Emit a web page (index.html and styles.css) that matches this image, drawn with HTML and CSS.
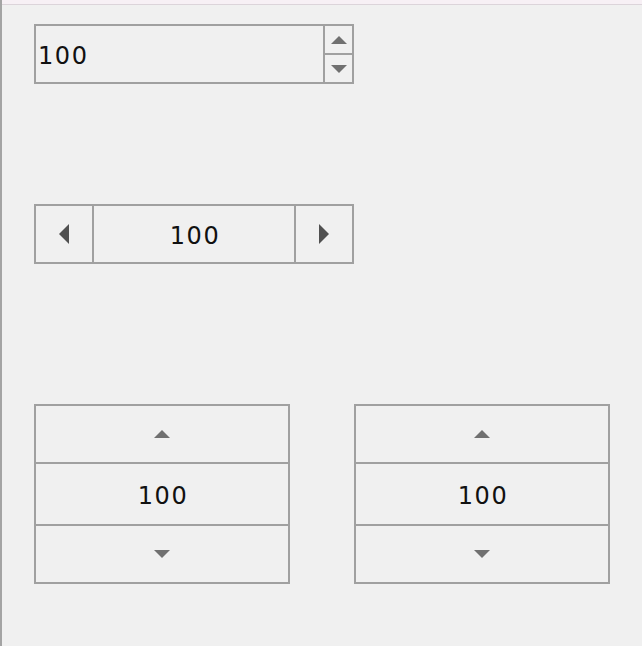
FILE: index.html
```html
<!DOCTYPE html>
<html>
<head>
<meta charset="utf-8">
<link rel="stylesheet" href="styles.css">
</head>
<body>
<div class="topbar"></div>
<main class="stage">
  <div class="spin-right">
    <div class="field">100</div>
    <div class="vbtns">
      <div class="vbtn"><span class="tri-up"></span></div>
      <div class="vbtn"><span class="tri-down"></span></div>
    </div>
  </div>

  <div class="spin-split">
    <div class="hbtn"><span class="tri-left"></span></div>
    <div class="hfield">100</div>
    <div class="hbtn"><span class="tri-right"></span></div>
  </div>

  <div class="vrow">
    <div class="spin-vert">
      <div class="vbig"><span class="tri-up"></span></div>
      <div class="vfield">100</div>
      <div class="vbig"><span class="tri-down"></span></div>
    </div>
    <div class="spin-vert">
      <div class="vbig"><span class="tri-up"></span></div>
      <div class="vfield">100</div>
      <div class="vbig"><span class="tri-down"></span></div>
    </div>
  </div>
</main>
</body>
</html>
```

FILE: styles.css
```css
html, body {
  margin: 0;
  padding: 0;
  height: 100%;
  background: #f0f0f0;
  font-family: "DejaVu Sans", sans-serif;
  color: #111;
}
body {
  display: flex;
  flex-direction: column;
  border-left: 2px solid #a4a4a4;
  box-sizing: border-box;
}
.topbar {
  height: 4px;
  background: #f7f0f5;
  border-bottom: 1px solid #dcd4da;
  flex: none;
}
.stage {
  flex: 1;
  padding: 19px 0 0 32px;
  display: flex;
  flex-direction: column;
  align-items: flex-start;
}
.num {
  font-size: 24px;
  letter-spacing: 1.6px;
}
.spin-right {
  display: flex;
  width: 320px;
  height: 60px;
  box-sizing: border-box;
  border: 2px solid #a0a0a0;
}
.field {
  flex: 1;
  display: flex;
  align-items: center;
  padding: 3px 0 0 2px;
  font-size: 24px;
  letter-spacing: 1.6px;
  border-right: 2px solid #a0a0a0;
}
.vbtns {
  width: 27px;
  display: flex;
  flex-direction: column;
}
.vbtn {
  flex: 1;
  display: flex;
  align-items: center;
  justify-content: center;
}
.vbtn + .vbtn {
  border-top: 2px solid #a0a0a0;
}
.tri-up {
  width: 0;
  height: 0;
  border-left: 8px solid transparent;
  border-right: 8px solid transparent;
  border-bottom: 8px solid #707070;
}
.tri-down {
  width: 0;
  height: 0;
  border-left: 8px solid transparent;
  border-right: 8px solid transparent;
  border-top: 8px solid #707070;
}
.tri-left {
  width: 0;
  height: 0;
  border-top: 10px solid transparent;
  border-bottom: 10px solid transparent;
  border-right: 10px solid #505050;
}
.tri-right {
  width: 0;
  height: 0;
  border-top: 10px solid transparent;
  border-bottom: 10px solid transparent;
  border-left: 10px solid #505050;
}
.spin-split {
  margin-top: 120px;
  display: flex;
  width: 320px;
  height: 60px;
  box-sizing: border-box;
  border: 2px solid #a0a0a0;
}
.hbtn {
  width: 56px;
  display: flex;
  align-items: center;
  justify-content: center;
}
.hfield {
  flex: 1;
  display: flex;
  align-items: center;
  justify-content: center;
  padding: 3px 0 0 2px;
  font-size: 24px;
  letter-spacing: 1.6px;
  border-left: 2px solid #a0a0a0;
  border-right: 2px solid #a0a0a0;
}
.vrow {
  margin-top: 140px;
  display: flex;
  gap: 64px;
}
.spin-vert {
  width: 256px;
  height: 180px;
  box-sizing: border-box;
  border: 2px solid #a0a0a0;
  display: flex;
  flex-direction: column;
}
.vbig {
  height: 56px;
  display: flex;
  align-items: center;
  justify-content: center;
}
.vfield {
  height: 60px;
  box-sizing: content-box;
  display: flex;
  align-items: center;
  justify-content: center;
  padding-left: 2px;
  font-size: 24px;
  letter-spacing: 1.6px;
  border-top: 2px solid #a0a0a0;
  border-bottom: 2px solid #a0a0a0;
}
.vfield {
  height: 57px;
  padding-top: 3px;
}
```
